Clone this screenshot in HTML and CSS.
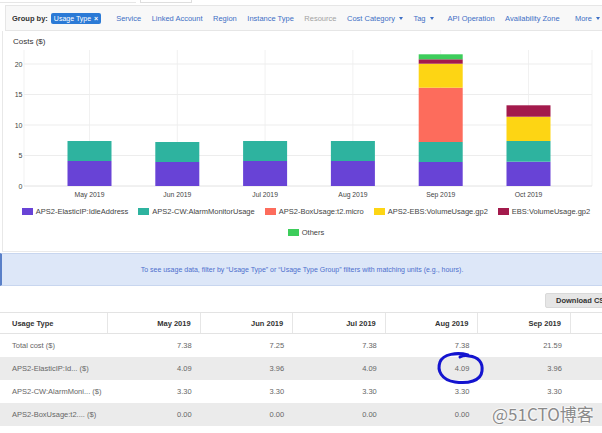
FILE: index.html
```html
<!DOCTYPE html>
<html>
<head>
<meta charset="utf-8">
<link rel="stylesheet" href="styles.css">
</head>
<body>
<div class="topstrip"><span class="seg1"></span><span class="seg2"></span></div>

<div class="groupbar">
  <span class="gb-label">Group by:</span>
  <span class="badge">Usage Type <b>×</b></span>
  <span class="gb-link first">Service</span>
  <span class="gb-link">Linked Account</span>
  <span class="gb-link">Region</span>
  <span class="gb-link">Instance Type</span>
  <span class="gb-link muted">Resource</span>
  <span class="gb-link">Cost Category<i class="caret"></i></span>
  <span class="gb-link">Tag<i class="caret"></i></span>
  <span class="gb-link api">API Operation</span>
  <span class="gb-link">Availability Zone</span>
  <span class="gb-link more">More<i class="caret"></i></span>
</div>

<div class="chart-panel">
  <div class="chart-title">Costs ($)</div>
  <svg class="chart" width="600" height="152" viewBox="2 48 600 152">
    <g stroke="#f1f1f1" stroke-width="1">
      <line x1="24" y1="50" x2="24" y2="186"/>
      <line x1="89.5" y1="50" x2="89.5" y2="186"/>
      <line x1="177.3" y1="50" x2="177.3" y2="186"/>
      <line x1="265.1" y1="50" x2="265.1" y2="186"/>
      <line x1="352.9" y1="50" x2="352.9" y2="186"/>
      <line x1="440.7" y1="50" x2="440.7" y2="186"/>
      <line x1="528.5" y1="50" x2="528.5" y2="186"/>
      <line x1="592" y1="50" x2="592" y2="186"/>
    </g>
    <g stroke="#ededed" stroke-width="1">
      <line x1="24" y1="64" x2="592" y2="64"/>
      <line x1="24" y1="94.5" x2="592" y2="94.5"/>
      <line x1="24" y1="125" x2="592" y2="125"/>
      <line x1="24" y1="155.5" x2="592" y2="155.5"/>
      <line x1="24" y1="186" x2="592" y2="186" stroke="#e2e2e2"/>
    </g>
    <g class="ylab" text-anchor="end">
      <text x="22.5" y="66.5">20</text>
      <text x="22.5" y="97">15</text>
      <text x="22.5" y="127.5">10</text>
      <text x="22.5" y="158">5</text>
      <text x="22.5" y="188.5">0</text>
    </g>
    <!-- May -->
    <rect x="67.5" y="161" width="44" height="25" fill="#6843d6"/>
    <rect x="67.5" y="141" width="44" height="20" fill="#2eb39f"/>
    <!-- Jun -->
    <rect x="155.3" y="162" width="44" height="24" fill="#6843d6"/>
    <rect x="155.3" y="142" width="44" height="20" fill="#2eb39f"/>
    <!-- Jul -->
    <rect x="243.1" y="161" width="44" height="25" fill="#6843d6"/>
    <rect x="243.1" y="141" width="44" height="20" fill="#2eb39f"/>
    <!-- Aug -->
    <rect x="330.9" y="161" width="44" height="25" fill="#6843d6"/>
    <rect x="330.9" y="141" width="44" height="20" fill="#2eb39f"/>
    <!-- Sep -->
    <rect x="418.7" y="162" width="44" height="24" fill="#6843d6"/>
    <rect x="418.7" y="142" width="44" height="20" fill="#2eb39f"/>
    <rect x="418.7" y="87.7" width="44" height="54.3" fill="#fd6c5c"/>
    <rect x="418.7" y="63.7" width="44" height="24" fill="#fdd514"/>
    <rect x="418.7" y="59.3" width="44" height="4.4" fill="#a31a4c"/>
    <rect x="418.7" y="54.3" width="44" height="5" fill="#3dcd5b"/>
    <!-- Oct -->
    <rect x="506.5" y="161.7" width="44" height="24.3" fill="#6843d6"/>
    <rect x="506.5" y="141" width="44" height="20.7" fill="#2eb39f"/>
    <rect x="506.5" y="116.7" width="44" height="24.3" fill="#fdd514"/>
    <rect x="506.5" y="105.3" width="44" height="11.4" fill="#a31a4c"/>
    <g class="xlab" text-anchor="middle">
      <text x="89.5" y="196.5">May 2019</text>
      <text x="177.3" y="196.5">Jun 2019</text>
      <text x="265.1" y="196.5">Jul 2019</text>
      <text x="352.9" y="196.5">Aug 2019</text>
      <text x="440.7" y="196.5">Sep 2019</text>
      <text x="528.5" y="196.5">Oct 2019</text>
    </g>
  </svg>
  <div class="legend">
    <span class="lg-item"><i class="sw sw-purple"></i>APS2-ElasticIP:IdleAddress</span>
    <span class="lg-item"><i class="sw sw-teal"></i>APS2-CW:AlarmMonitorUsage</span>
    <span class="lg-item"><i class="sw sw-salmon"></i>APS2-BoxUsage:t2.micro</span>
    <span class="lg-item"><i class="sw sw-yellow"></i>APS2-EBS:VolumeUsage.gp2</span>
    <span class="lg-item"><i class="sw sw-maroon"></i>EBS:VolumeUsage.gp2</span>
    <span class="lg-item"><i class="sw sw-green"></i>Others</span>
  </div>
</div>

<div class="banner">To see usage data, filter by “Usage Type” or “Usage Type Group” filters with matching units (e.g., hours).</div>

<div class="toolbar"><button class="dl">Download CSV</button></div>

<div class="table">
  <div class="trow thead">
    <div class="cell first">Usage Type</div>
    <div class="cell">May 2019</div>
    <div class="cell">Jun 2019</div>
    <div class="cell">Jul 2019</div>
    <div class="cell">Aug 2019</div>
    <div class="cell">Sep 2019</div>
    <div class="cell"></div>
  </div>
  <div class="trow">
    <div class="cell first">Total cost ($)</div>
    <div class="cell">7.38</div><div class="cell">7.25</div><div class="cell">7.38</div><div class="cell">7.38</div><div class="cell">21.59</div><div class="cell"></div>
  </div>
  <div class="trow alt">
    <div class="cell first">APS2-ElasticIP:Id... ($)</div>
    <div class="cell">4.09</div><div class="cell">3.96</div><div class="cell">4.09</div><div class="cell">4.09</div><div class="cell">3.96</div><div class="cell"></div>
  </div>
  <div class="trow">
    <div class="cell first">APS2-CW:AlarmMoni... ($)</div>
    <div class="cell">3.30</div><div class="cell">3.30</div><div class="cell">3.30</div><div class="cell">3.30</div><div class="cell">3.30</div><div class="cell"></div>
  </div>
  <div class="trow alt">
    <div class="cell first">APS2-BoxUsage:t2.... ($)</div>
    <div class="cell">0.00</div><div class="cell">0.00</div><div class="cell">0.00</div><div class="cell">0.00</div><div class="cell"></div><div class="cell"></div>
  </div>
</div>

<svg class="annot" width="52" height="36" viewBox="0 0 52 36">
  <path d="M33 4 C22 1 8 3 5 11 C2 19 6 29 20 31 C33 33 46 30 47 20 C48 11 43 6 34 5 C30 4 27 5 25 6" fill="none" stroke="#1414cf" stroke-width="3" stroke-linecap="round"/>
</svg>

<div class="watermark">@51CTO博客</div>
</body>
</html>
```

FILE: styles.css
```css
* {
  box-sizing: border-box;
  margin: 0;
  padding: 0;
}

html, body {
  width: 602px;
  height: 433px;
  overflow: hidden;
  background: #ffffff;
}

body {
  position: relative;
  font-family: "Liberation Sans", Arial, sans-serif;
  color: #333333;
}

/* faint remnants of inputs above */
.topstrip {
  height: 5px;
  display: flex;
}
.topstrip .seg1 {
  width: 136px;
  height: 3px;
  border-bottom: 1px solid #e6e6e6;
}
.topstrip .seg2 {
  width: 52px;
  height: 3px;
  margin-left: 4px;
  border: 1px solid #dedede;
  border-top: none;
}

/* group-by bar */
.groupbar {
  height: 26px;
  margin-left: 5px;
  padding-left: 6px;
  padding-right: 2px;
  display: flex;
  align-items: center;
  background: #f8f8f8;
  border: 1px solid #e6e6e6;
  border-right: none;
  font-size: 7.5px;
  white-space: nowrap;
}
.gb-label {
  font-weight: bold;
  color: #333333;
  margin-right: 3px;
}
.badge {
  height: 11px;
  line-height: 11px;
  padding: 0 3px;
  background: #2b7ad6;
  color: #ffffff;
  font-size: 7px;
  border-radius: 2px;
}
.badge b {
  font-size: 7px;
  margin-left: 1px;
}
.gb-link {
  color: #3e6fc5;
  margin-left: 10.5px;
}
.gb-link.first {
  margin-left: 15px;
}
.gb-link.api {
  margin-left: 14px;
}
.gb-link.muted {
  color: #a2a2a2;
}
.gb-link.more {
  margin-left: auto;
}
.caret {
  display: inline-block;
  width: 0;
  height: 0;
  border-left: 2.5px solid transparent;
  border-right: 2.5px solid transparent;
  border-top: 3px solid currentColor;
  margin-left: 4px;
  vertical-align: middle;
}

/* chart panel */
.chart-panel {
  height: 221px;
  margin-left: 2px;
  box-shadow: inset 1px 0 #e8e8e8;
  border-bottom: 1px solid #eaeaea;
}
.chart-title {
  padding: 6px 0 0 11px;
  height: 17px;
  font-size: 8px;
  line-height: 10px;
  color: #333333;
}
.chart {
  display: block;
}
.chart text {
  font-family: "Liberation Sans", Arial, sans-serif;
}
.ylab text {
  font-size: 7px;
  fill: #444444;
}
.xlab text {
  font-size: 6.8px;
  fill: #444444;
}

.legend {
  display: flex;
  flex-wrap: wrap;
  justify-content: center;
  column-gap: 10px;
  row-gap: 7px;
  padding: 4px 0 0 8px;
  font-size: 7.5px;
  color: #444444;
}
.lg-item {
  display: flex;
  align-items: center;
  height: 14px;
  white-space: nowrap;
}
.sw {
  display: inline-block;
  width: 11px;
  height: 7px;
  margin-right: 3px;
}
.sw-purple { background: #6843d6; }
.sw-teal { background: #2eb39f; }
.sw-salmon { background: #fd6c5c; }
.sw-yellow { background: #fdd514; }
.sw-maroon { background: #a31a4c; }
.sw-green { background: #3dcd5b; }

/* info banner */
.banner {
  margin-top: 1px;
  height: 33px;
  line-height: 31px;
  background: #dde7f8;
  border-left: 2px solid #5a80c8;
  border-top: 1px solid #c8d6ef;
  border-bottom: 1px solid #c8d6ef;
  text-align: center;
  font-size: 7px;
  color: #4d6fcd;
  white-space: nowrap;
}

/* toolbar */
.toolbar {
  height: 26px;
  padding: 7px 0 0 545px;
  display: flex;
  white-space: nowrap;
}
.dl {
  height: 15px;
  padding: 0 10px;
  background: #e6e6e6;
  border: 1px solid #d9d9d9;
  border-radius: 2px;
  font-family: "Liberation Sans", Arial, sans-serif;
  font-weight: bold;
  font-size: 7.5px;
  color: #333333;
  flex: none;
}

/* table */
.table {
  width: 760px;
  font-size: 7.5px;
}
.trow {
  display: grid;
  grid-template-columns: 108px repeat(6, 92.6px);
  height: 23px;
  align-items: center;
  color: #666666;
}
.trow.alt {
  background: #ebebeb;
}
.trow.thead {
  height: 22px;
  align-items: stretch;
  border-top: 1px solid #e3e3e3;
  border-bottom: 1px solid #e3e3e3;
  font-weight: bold;
  color: #333333;
}
.thead .cell {
  display: flex;
  align-items: center;
  justify-content: flex-end;
  border-right: 1px solid #e6e6e6;
}
.thead .cell.first {
  justify-content: flex-start;
}
.cell {
  text-align: right;
  padding-right: 9px;
  white-space: nowrap;
}
.cell.first {
  text-align: left;
  padding-left: 12px;
  padding-right: 0;
}

/* hand-drawn annotation over the table */
.annot {
  position: absolute;
  left: 435px;
  top: 351px;
  pointer-events: none;
}

.watermark {
  position: absolute;
  left: 492px;
  top: 404px;
  font-family: "Noto Sans CJK SC", "Liberation Sans", sans-serif;
  font-size: 17px;
  line-height: 20px;
  color: #8a8a8a;
  white-space: nowrap;
  text-shadow: 0 0 2px #ffffff, 0 0 2px #ffffff, 0 0 3px #ffffff;
}
```
